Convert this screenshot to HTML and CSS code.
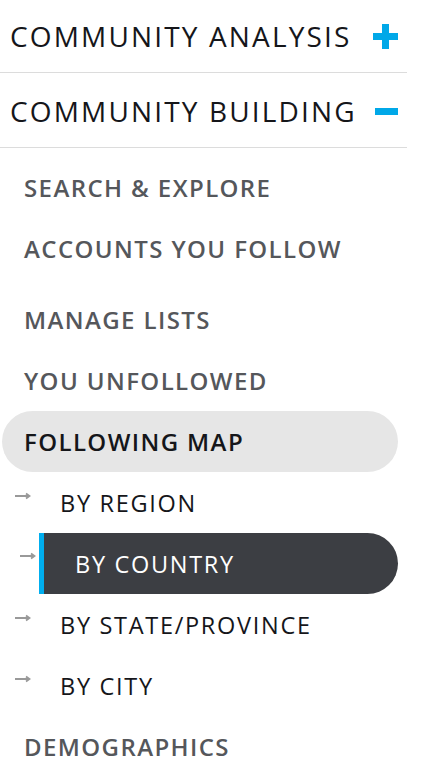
FILE: index.html
```html
<!DOCTYPE html>
<html>
<head>
<meta charset="utf-8">
<link rel="stylesheet" href="styles.css">
</head>
<body>
<nav class="sidebar">
  <div class="section-header">
    <span class="section-title">COMMUNITY ANALYSIS</span>
    <span class="toggle plus"></span>
  </div>
  <div class="section-header">
    <span class="section-title">COMMUNITY BUILDING</span>
    <span class="toggle minus"></span>
  </div>
  <ul class="menu">
    <li class="menu-item">SEARCH &amp; EXPLORE</li>
    <li class="menu-item">ACCOUNTS YOU FOLLOW</li>
    <li class="menu-item spaced">MANAGE LISTS</li>
    <li class="menu-item">YOU UNFOLLOWED</li>
    <li class="menu-item open">FOLLOWING MAP</li>
    <li class="sub-item">
      <svg class="arrow" width="16" height="8" viewBox="0 0 16 8"><path d="M0 4H14M11 1.5L14.5 4L11 6.5" fill="none" stroke="#999" stroke-width="1.8"/></svg>
      <span class="sub-label">BY REGION</span>
    </li>
    <li class="sub-item active">
      <svg class="arrow" width="16" height="8" viewBox="0 0 16 8"><path d="M0 4H14M11 1.5L14.5 4L11 6.5" fill="none" stroke="#999" stroke-width="1.8"/></svg>
      <span class="sub-label">BY COUNTRY</span>
    </li>
    <li class="sub-item">
      <svg class="arrow" width="16" height="8" viewBox="0 0 16 8"><path d="M0 4H14M11 1.5L14.5 4L11 6.5" fill="none" stroke="#999" stroke-width="1.8"/></svg>
      <span class="sub-label">BY STATE/PROVINCE</span>
    </li>
    <li class="sub-item">
      <svg class="arrow" width="16" height="8" viewBox="0 0 16 8"><path d="M0 4H14M11 1.5L14.5 4L11 6.5" fill="none" stroke="#999" stroke-width="1.8"/></svg>
      <span class="sub-label">BY CITY</span>
    </li>
    <li class="menu-item">DEMOGRAPHICS</li>
  </ul>
</nav>
</body>
</html>
```
FILE: styles.css
```css
* { box-sizing: border-box; }
html, body { margin: 0; padding: 0; background: #fff; }
body { font-family: "Open Sans", "Noto Sans", sans-serif; overflow: hidden; }
.sidebar { width: 422px; }
.section-header {
  width: 407px;
  height: 73px;
  display: flex;
  align-items: center;
  justify-content: space-between;
  padding: 0 9px 0 10px;
  border-bottom: 1px solid #dcdcdc;
}
.section-header + .section-header { height: 75px; padding-top: 2px; }
.section-title {
  font-size: 28px;
  font-weight: 500;
  letter-spacing: 2.15px;
  color: #15161a;
}
.toggle { position: relative; width: 25px; height: 25px; display: block; }
.toggle::before, .toggle::after {
  content: "";
  position: absolute;
  background: #00a8e8;
}
.toggle::before { left: 0; right: 0; top: 9px; height: 7px; }
.plus::after { top: 0; bottom: 0; left: 9px; width: 7px; }
.minus::after { display: none; }
.minus::before { left: 2px; }
.menu { list-style: none; margin: 0; padding: 9px 0 0 0; }
.menu-item {
  height: 61px;
  display: flex;
  align-items: center;
  padding-left: 24px;
  font-size: 24px;
  font-weight: 600;
  letter-spacing: 1.4px;
  color: #55575b;
}
.menu-item.spaced { margin-top: 10px; }
.menu-item.open {
  margin-left: 2px;
  width: 396px;
  padding-left: 22px;
  background: #e6e6e6;
  border-radius: 31px;
  color: #15161a;
}
.sub-item {
  height: 61px;
  display: flex;
  align-items: center;
  padding-left: 15px;
  font-size: 23.5px;
  font-weight: 400;
  letter-spacing: 1.7px;
  color: #15161a;
}
.arrow { flex: none; margin-right: 29px; margin-top: -14px; }
.sub-item.active {
  padding-left: 20px;
  width: 398px;
}
.sub-item.active .arrow { margin-right: 3px; margin-top: -16px; }
.sub-item.active .sub-label {
  align-self: stretch;
  flex: 1;
  display: flex;
  align-items: center;
  background: #3c3e43;
  color: #fff;
  border-left: 5px solid #00aeef;
  border-radius: 0 31px 31px 0;
  padding-left: 31px;
}
```
